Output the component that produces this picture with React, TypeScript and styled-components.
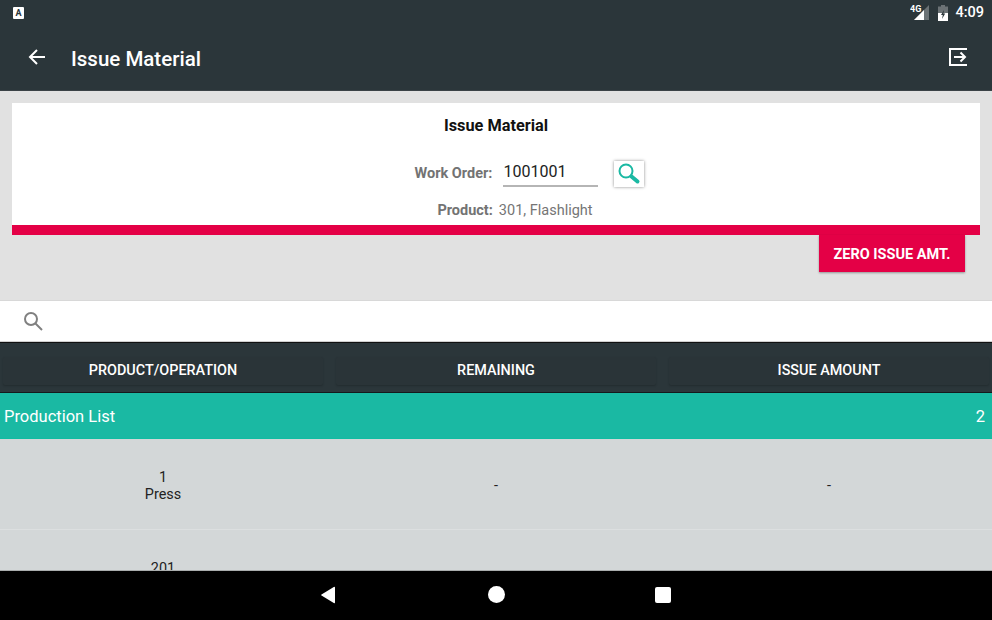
import React from 'react';
import styled, { createGlobalStyle } from 'styled-components';

const GlobalStyle = createGlobalStyle`
  html, body {
    margin: 0;
    padding: 0;
    background: #000;
  }
  * {
    box-sizing: border-box;
  }
`;

const DARK = '#2b363a';
const RED = '#e40046';
const TEAL = '#1ab9a3';

const Page = styled.div`
  width: 992px;
  height: 620px;
  display: flex;
  flex-direction: column;
  overflow: hidden;
  background: #e1e1e1;
  font-family: Roboto, 'Liberation Sans', sans-serif;
`;

const Header = styled.header`
  height: 91px;
  flex: none;
  background: ${DARK};
  border-bottom: 1px solid #3a4246;
  color: #fff;
`;

const StatusBar = styled.div`
  height: 25px;
  display: flex;
  align-items: center;
  padding: 0 8px 0 13px;
`;

const NotifyBadge = styled.span`
  width: 11px;
  height: 12px;
  background: #fff;
  border-radius: 1px;
  color: ${DARK};
  font-size: 9px;
  font-weight: 700;
  line-height: 12px;
  text-align: center;
`;

const StatusRight = styled.div`
  margin-left: auto;
  display: flex;
  align-items: center;
`;

const Clock = styled.span`
  font-size: 14.5px;
  font-weight: 500;
  margin-left: 7px;
`;

const AppBar = styled.div`
  height: 65px;
  display: flex;
  align-items: center;
  padding: 0 24px 2px 27px;
`;

const AppTitle = styled.h1`
  margin: 4px 0 0 24px;
  font-size: 20.5px;
  font-weight: 500;
`;

const ExitIcon = styled.svg`
  margin-left: auto;
`;

const Content = styled.main`
  height: 209px;
  flex: none;
  padding: 12px 12px 0;
`;

const Card = styled.section`
  height: 132px;
  background: #fff;
  border-bottom: 10px solid ${RED};
  display: flex;
  flex-direction: column;
  align-items: center;
`;

const CardTitle = styled.h2`
  margin: 14px 0 0;
  font-size: 16.3px;
  line-height: 18px;
  font-weight: 700;
  color: #111;
`;

const OrderRow = styled.div`
  margin-top: 24px;
  height: 28px;
  display: flex;
  align-items: center;
  padding-left: 67px;
`;

const FieldLabel = styled.span`
  font-size: 14.5px;
  font-weight: 700;
  color: #737373;
`;

const OrderInput = styled.div`
  width: 95px;
  height: 27px;
  margin: 0 16px 0 11px;
  border-bottom: 2px solid #b5b5b5;
  font-size: 16px;
  line-height: 24px;
  color: #222;
`;

const LookupButton = styled.button`
  width: 30px;
  height: 26px;
  margin-top: 2px;
  padding: 0;
  border: none;
  background: #fff;
  box-shadow: 0 0 3px rgba(0, 0, 0, 0.45);
  display: flex;
  align-items: center;
  justify-content: center;
`;

const ProductRow = styled.div`
  margin-top: 15px;
  display: flex;
  align-items: center;
  gap: 6px;
  padding-left: 38px;
`;

const ProductValue = styled.span`
  font-size: 14.5px;
  color: #757575;
`;

const ActionRow = styled.div`
  display: flex;
  justify-content: flex-end;
  padding-right: 15px;
`;

const ZeroButton = styled.button`
  width: 146px;
  height: 37px;
  padding: 2px 0 0;
  border: none;
  background: ${RED};
  color: #fff;
  font-family: inherit;
  font-size: 14.5px;
  font-weight: 700;
  box-shadow: 0 1px 2px rgba(0, 0, 0, 0.35);
`;

const SearchBar = styled.div`
  height: 42px;
  flex: none;
  background: #fff;
  border-top: 1px solid #d8d8d8;
  border-bottom: 1px solid #d0d0d0;
  display: flex;
  align-items: center;
  padding-left: 21px;
`;

const ColumnBar = styled.div`
  height: 51px;
  flex: none;
  background: ${DARK};
  border-top: 1px solid #111;
  border-bottom: 1px solid #14191c;
  display: grid;
  grid-template-columns: repeat(3, 320px);
  justify-content: space-between;
  padding: 14px 3px 7px;
`;

const ColumnButton = styled.div`
  background: #2a3438;
  border-radius: 2px;
  box-shadow: 0 1px 2px rgba(0, 0, 0, 0.2);
  color: #fff;
  font-size: 14.4px;
  font-weight: 500;
  line-height: 27px;
  text-align: center;
`;

const GroupRow = styled.div`
  height: 46px;
  flex: none;
  background: ${TEAL};
  border-bottom: 1px solid #10bca2;
  color: #fff;
  font-size: 16.5px;
  display: flex;
  align-items: center;
  justify-content: space-between;
  padding: 2px 7px 0 4px;
`;

const Rows = styled.div`
  flex: 1;
  min-height: 0;
  overflow: hidden;
  background: #d3d7d8;
  border-bottom: 1px solid #a9adad;
`;

const Row = styled.div`
  height: 91px;
  display: grid;
  grid-template-columns: repeat(3, 320px);
  justify-content: space-between;
  padding: 0 3px;
  align-items: center;
  border-bottom: 1px solid #dcdfe0;
`;

const Cell = styled.div<{ $top?: boolean }>`
  font-size: 14.4px;
  line-height: 17px;
  color: #222;
  text-align: center;
  align-self: ${({ $top }) => ($top ? 'start' : 'center')};
  margin-top: ${({ $top }) => ($top ? '30px' : '2px')};
`;

const NavBar = styled.nav`
  height: 49px;
  flex: none;
  background: #000;
  display: grid;
  grid-template-columns: repeat(3, 167px);
  justify-content: center;
  align-items: center;
  padding-bottom: 2px;
`;

const NavSlot = styled.div`
  display: flex;
  justify-content: center;
`;

const BackIcon = styled.svg`
  margin-right: 2px;
`;

const Home = styled.span`
  width: 17px;
  height: 17px;
  border-radius: 50%;
  background: #fff;
`;

const Recent = styled.span`
  width: 16px;
  height: 16px;
  border-radius: 2px;
  background: #fff;
`;

const rows = [
  { id: '1', name: 'Press', remaining: '-', issue: '-' },
  { id: '201', name: '', remaining: '', issue: '' },
];

export default function App() {
  return (
    <Page>
      <GlobalStyle />
      <Header>
        <StatusBar>
          <NotifyBadge>A</NotifyBadge>
          <StatusRight>
            <svg width="20" height="16" viewBox="0 0 20 16">
              <path d="M19 0v15H4z" fill="#fff" opacity="0.3" />
              <path d="M14 5v10H4z" fill="#fff" />
              <text x="0" y="7" fontSize="9" fontWeight="700" fill="#fff" fontFamily="Roboto, sans-serif">4G</text>
            </svg>
            <svg width="10" height="16" viewBox="0 0 10 16" style={{ marginLeft: 8 }}>
              <path d="M3 0h4v1.5h3V16H0V1.5h3z" fill="#fff" opacity="0.3" />
              <path d="M0 8h10v8H0z" fill="#fff" />
              <path d="M6 5 3 10h1.8L4 14l3.2-5.4H5.4z" fill={DARK} />
            </svg>
            <Clock>4:09</Clock>
          </StatusRight>
        </StatusBar>
        <AppBar>
          <svg width="20" height="20" viewBox="0 0 20 20" fill="none" stroke="#fff" strokeWidth="2">
            <path d="M18 10H3M10 3l-7 7 7 7" />
          </svg>
          <AppTitle>Issue Material</AppTitle>
          <ExitIcon width="20" height="20" viewBox="0 0 20 20" fill="none" stroke="#fff" strokeWidth="2">
            <path d="M19 2H2v16h17" />
            <path d="M6 10h11M12.5 5.5 17 10l-4.500 4.500" />
          </ExitIcon>
        </AppBar>
      </Header>
      <Content>
        <Card>
          <CardTitle>Issue Material</CardTitle>
          <OrderRow>
            <FieldLabel>Work Order:</FieldLabel>
            <OrderInput>1001001</OrderInput>
            <LookupButton aria-label="Find work order">
              <svg width="26" height="24" viewBox="0 0 26 24" fill="none" stroke={TEAL}>
                <circle cx="10" cy="9" r="6.5" strokeWidth="2" />
                <path d="M15.5 14.500l6 5" strokeWidth="4" strokeLinecap="round" />
              </svg>
            </LookupButton>
          </OrderRow>
          <ProductRow>
            <FieldLabel>Product:</FieldLabel>
            <ProductValue>301, Flashlight</ProductValue>
          </ProductRow>
        </Card>
        <ActionRow>
          <ZeroButton>ZERO ISSUE AMT.</ZeroButton>
        </ActionRow>
      </Content>
      <SearchBar>
        <svg width="24" height="24" viewBox="0 0 24 24" fill="none" stroke="#808080" strokeWidth="2">
          <circle cx="10" cy="10" r="6" />
          <path d="M14.5 14.5 21 21" />
        </svg>
      </SearchBar>
      <ColumnBar>
        <ColumnButton>PRODUCT/OPERATION</ColumnButton>
        <ColumnButton>REMAINING</ColumnButton>
        <ColumnButton>ISSUE AMOUNT</ColumnButton>
      </ColumnBar>
      <GroupRow>
        <span>Production List</span>
        <span>2</span>
      </GroupRow>
      <Rows>
        {rows.map((row) => (
          <Row key={row.id}>
            <Cell $top>
              {row.id}
              <br />
              {row.name}
            </Cell>
            <Cell>{row.remaining}</Cell>
            <Cell>{row.issue}</Cell>
          </Row>
        ))}
      </Rows>
      <NavBar>
        <NavSlot>
          <BackIcon width="16" height="18" viewBox="0 0 16 18">
            <path d="M15 1.5v15a.8.8 0 0 1-1.2.6L1.5 9.6a.7.7 0 0 1 0-1.2L13.8.9a.8.8 0 0 1 1.2.6z" fill="#fff" />
          </BackIcon>
        </NavSlot>
        <NavSlot>
          <Home />
        </NavSlot>
        <NavSlot>
          <Recent />
        </NavSlot>
      </NavBar>
    </Page>
  );
}
